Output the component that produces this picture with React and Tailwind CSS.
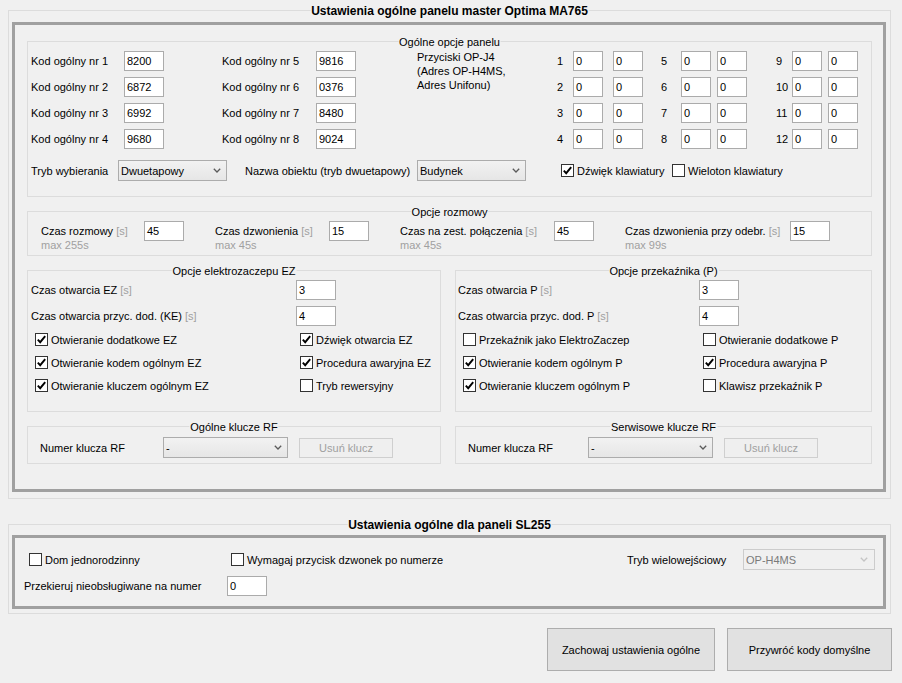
import React from "react";

function TB({ v, w = "w-[40px]" }) {
  return (
    <div className={`${w} h-[20px] shrink-0 bg-white border border-[#ababab] pl-[2px] leading-[18px] text-black`}>
      {v}
    </div>
  );
}

function Chevron({ color = "#5a5a5a" }) {
  return (
    <svg width="8" height="5" viewBox="0 0 8 5" className="shrink-0">
      <polyline points="0.8,0.8 4,4 7.2,0.8" fill="none" stroke={color} strokeWidth="1.3" />
    </svg>
  );
}

function Combo({ v, w, disabled }) {
  if (disabled) {
    return (
      <div className={`${w} h-[21px] shrink-0 flex items-center justify-between pl-[2px] pr-[6px] border border-[#cccccc] bg-[#f0f0f0] text-[#7a7a7a]`}>
        <span>{v}</span>
        <Chevron color="#c4c4c4" />
      </div>
    );
  }
  return (
    <div className={`${w} h-[21px] shrink-0 flex items-center justify-between pl-[2px] pr-[5px] border border-[#acacac] bg-linear-to-b from-[#f2f2f2] to-[#e6e6e6]`}>
      <span>{v}</span>
      <Chevron />
    </div>
  );
}

function Box({ checked }) {
  return (
    <div className="w-[13px] h-[13px] shrink-0 border border-[#333333] bg-white flex items-center justify-center">
      {checked && (
        <svg width="11" height="11" viewBox="0 0 11 11">
          <polyline points="1.8,5.6 4.2,8.2 9.2,2.2" fill="none" stroke="#000" strokeWidth="1.9" />
        </svg>
      )}
    </div>
  );
}

function Chk({ checked, label, w = "" }) {
  return (
    <div className={`${w} flex items-center gap-[3px] shrink-0 whitespace-nowrap`}>
      <Box checked={checked} />
      <span>{label}</span>
    </div>
  );
}

function Group({ title, bold, className, children }) {
  return (
    <div className={`relative border border-[#dcdcdc] shrink-0 ${className}`}>
      <div
        className={`absolute left-1/2 -translate-x-1/2 top-[-7px] px-[1px] bg-[#f0f0f0] whitespace-nowrap leading-[14px] ${
          bold ? "font-bold text-[12px]" : "text-[11px]"
        }`}
      >
        {title}
      </div>
      {children}
    </div>
  );
}

function S() {
  return <span className="text-[#a0a0a0]">[s]</span>;
}

function Btn({ children, w, disabled }) {
  if (disabled) {
    return (
      <div className={`${w} h-[20px] shrink-0 flex items-center justify-center border border-[#cfcfcf] bg-[#efefef] text-[#a0a0a0]`}>
        {children}
      </div>
    );
  }
  return (
    <div className={`${w} h-[43px] shrink-0 flex items-center justify-center border border-[#adadad] bg-[#e1e1e1]`}>
      {children}
    </div>
  );
}

const codesA = [
  ["Kod ogólny nr 1", "8200"],
  ["Kod ogólny nr 2", "6872"],
  ["Kod ogólny nr 3", "6992"],
  ["Kod ogólny nr 4", "9680"],
];
const codesB = [
  ["Kod ogólny nr 5", "9816"],
  ["Kod ogólny nr 6", "0376"],
  ["Kod ogólny nr 7", "8480"],
  ["Kod ogólny nr 8", "9024"],
];

export default function App() {
  return (
    <div className="w-[902px] h-[683px] overflow-hidden bg-[#f0f0f0] font-['Liberation_Sans',Arial,sans-serif] text-[11px] leading-[14px] text-black pt-[10px] pl-[8px]">
      {/* Group 1 */}
      <Group title="Ustawienia ogólne panelu master Optima MA765" bold className="w-[883px] h-[489px]">
        <div className="ml-[3px] mt-[11px] w-[874px] h-[470px] border-[3px] border-[#a0a0a0] pl-[12px] pt-[16px]">
          {/* Ogólne opcje panelu */}
          <Group title="Ogólne opcje panelu" className="w-[845px] h-[156px] pt-[9px] pl-[3px]">
            <div className="flex items-start">
              <div className="flex flex-col gap-[6px]">
                {codesA.map(([l, v]) => (
                  <div key={l} className="flex items-center h-[20px]">
                    <span className="w-[93px]">{l}</span>
                    <TB v={v} />
                  </div>
                ))}
              </div>
              <div className="flex flex-col gap-[6px] ml-[58px]">
                {codesB.map(([l, v]) => (
                  <div key={l} className="flex items-center h-[20px]">
                    <span className="w-[94px]">{l}</span>
                    <TB v={v} />
                  </div>
                ))}
              </div>
              <div className="ml-[61px] w-[140px] -mt-[1px] leading-[14px]">
                <div>Przyciski OP-J4</div>
                <div>(Adres OP-H4MS,</div>
                <div>Adres Unifonu)</div>
              </div>
              <div className="flex flex-col gap-[6px]">
                {[0, 1, 2, 3].map((i) => (
                  <div key={i} className="flex items-center h-[20px]">
                    <span className="w-[16px]">{i + 1}</span>
                    <TB v="0" w="w-[30px]" />
                    <div className="ml-[10px]">
                      <TB v="0" w="w-[30px]" />
                    </div>
                    <span className="ml-[18px] w-[20px]">{i + 5}</span>
                    <TB v="0" w="w-[30px]" />
                    <div className="ml-[6px]">
                      <TB v="0" w="w-[30px]" />
                    </div>
                    <span className="ml-[29px] w-[16px]">{i + 9}</span>
                    <TB v="0" w="w-[30px]" />
                    <div className="ml-[6px]">
                      <TB v="0" w="w-[30px]" />
                    </div>
                  </div>
                ))}
              </div>
            </div>
            <div className="mt-[11px] flex items-center h-[21px]">
              <span className="w-[87px]">Tryb wybierania</span>
              <Combo v="Dwuetapowy" w="w-[109px]" />
              <span className="ml-[18px] w-[172px]">Nazwa obiektu (tryb dwuetapowy)</span>
              <Combo v="Budynek" w="w-[109px]" />
              <div className="ml-[35px]">
                <Chk checked label="Dźwięk klawiatury" w="w-[111px]" />
              </div>
              <Chk label="Wieloton klawiatury" />
            </div>
          </Group>

          {/* Opcje rozmowy */}
          <Group title="Opcje rozmowy" className="mt-[14px] w-[845px] h-[45px] pt-[9px] pl-[13px]">
            <div className="flex items-start">
              <div className="w-[103px] mt-[3px]">
                <div>
                  Czas rozmowy <S />
                </div>
                <div className="text-[#a0a0a0]">max 255s</div>
              </div>
              <TB v="45" />
              <div className="ml-[31px] w-[114px] mt-[3px]">
                <div>
                  Czas dzwonienia <S />
                </div>
                <div className="text-[#a0a0a0]">max 45s</div>
              </div>
              <TB v="15" />
              <div className="ml-[31px] w-[154px] mt-[3px]">
                <div>
                  Czas na zest. połączenia <S />
                </div>
                <div className="text-[#a0a0a0]">max 45s</div>
              </div>
              <TB v="45" />
              <div className="ml-[31px] w-[165px] mt-[3px]">
                <div>
                  Czas dzwonienia przy odebr. <S />
                </div>
                <div className="text-[#a0a0a0]">max 99s</div>
              </div>
              <TB v="15" />
            </div>
          </Group>

          {/* EZ / P */}
          <div className="mt-[14px] flex gap-[14px]">
            <Group title="Opcje elektrozaczepu EZ" className="w-[414px] h-[142px] pt-[9px] pl-[3px]">
              <div className="flex items-center h-[20px]">
                <span className="w-[265px]">
                  Czas otwarcia EZ <S />
                </span>
                <TB v="3" />
              </div>
              <div className="mt-[6px] flex items-center h-[20px]">
                <span className="w-[265px]">
                  Czas otwarcia przyc. dod. (KE) <S />
                </span>
                <TB v="4" />
              </div>
              <div className="mt-[7px] pl-[4px] flex flex-col gap-[10px]">
                <div className="flex h-[13px] items-center">
                  <Chk checked label="Otwieranie dodatkowe EZ" w="w-[265px]" />
                  <Chk checked label="Dźwięk otwarcia EZ" />
                </div>
                <div className="flex h-[13px] items-center">
                  <Chk checked label="Otwieranie kodem ogólnym EZ" w="w-[265px]" />
                  <Chk checked label="Procedura awaryjna EZ" />
                </div>
                <div className="flex h-[13px] items-center">
                  <Chk checked label="Otwieranie kluczem ogólnym EZ" w="w-[265px]" />
                  <Chk label="Tryb rewersyjny" />
                </div>
              </div>
            </Group>
            <Group title="Opcje przekaźnika (P)" className="w-[417px] h-[142px] pt-[9px] pl-[2px]">
              <div className="flex items-center h-[20px]">
                <span className="w-[241px]">
                  Czas otwarcia P <S />
                </span>
                <TB v="3" />
              </div>
              <div className="mt-[6px] flex items-center h-[20px]">
                <span className="w-[241px]">
                  Czas otwarcia przyc. dod. P <S />
                </span>
                <TB v="4" />
              </div>
              <div className="mt-[7px] pl-[5px] flex flex-col gap-[10px]">
                <div className="flex h-[13px] items-center">
                  <Chk label="Przekaźnik jako ElektroZaczep" w="w-[240px]" />
                  <Chk label="Otwieranie dodatkowe P" />
                </div>
                <div className="flex h-[13px] items-center">
                  <Chk checked label="Otwieranie kodem ogólnym P" w="w-[240px]" />
                  <Chk checked label="Procedura awaryjna P" />
                </div>
                <div className="flex h-[13px] items-center">
                  <Chk checked label="Otwieranie kluczem ogólnym P" w="w-[240px]" />
                  <Chk label="Klawisz przekaźnik P" />
                </div>
              </div>
            </Group>
          </div>

          {/* RF */}
          <div className="mt-[14px] flex gap-[14px]">
            <Group title="Ogólne klucze RF" className="w-[414px] h-[38px] pt-[10px] pl-[12px]">
              <div className="flex items-center h-[21px]">
                <span className="w-[123px]">Numer klucza RF</span>
                <Combo v="-" w="w-[125px]" />
                <div className="ml-[11px]">
                  <Btn w="w-[94px]" disabled>
                    Usuń klucz
                  </Btn>
                </div>
              </div>
            </Group>
            <Group title="Serwisowe klucze RF" className="w-[417px] h-[38px] pt-[10px] pl-[12px]">
              <div className="flex items-center h-[21px]">
                <span className="w-[120px]">Numer klucza RF</span>
                <Combo v="-" w="w-[125px]" />
                <div className="ml-[11px]">
                  <Btn w="w-[94px]" disabled>
                    Usuń klucz
                  </Btn>
                </div>
              </div>
            </Group>
          </div>
        </div>
      </Group>

      {/* Group 2 */}
      <Group title="Ustawienia ogólne dla paneli SL255" bold className="mt-[25px] w-[883px] h-[90px]">
        <div className="ml-[3px] mt-[10px] w-[874px] h-[74px] border-[3px] border-[#a0a0a0]">
          <div className="mt-[11px] flex items-center h-[21px] pl-[14px] pr-[8px]">
            <Chk label="Dom jednorodzinny" w="w-[202px]" />
            <Chk label="Wymagaj przycisk dzwonek po numerze" />
            <span className="ml-auto w-[116px]">Tryb wielowejściowy</span>
            <Combo v="OP-H4MS" w="w-[132px]" disabled />
          </div>
          <div className="mt-[6px] flex items-center h-[20px] pl-[9px]">
            <span className="w-[203px]">Przekieruj nieobsługiwane na numer</span>
            <TB v="0" />
          </div>
        </div>
      </Group>

      {/* Buttons */}
      <div className="mt-[14px] w-[884px] flex justify-end gap-[12px]">
        <Btn w="w-[168px]">Zachowaj ustawienia ogólne</Btn>
        <Btn w="w-[165px]">Przywróć kody domyślne</Btn>
      </div>
    </div>
  );
}
